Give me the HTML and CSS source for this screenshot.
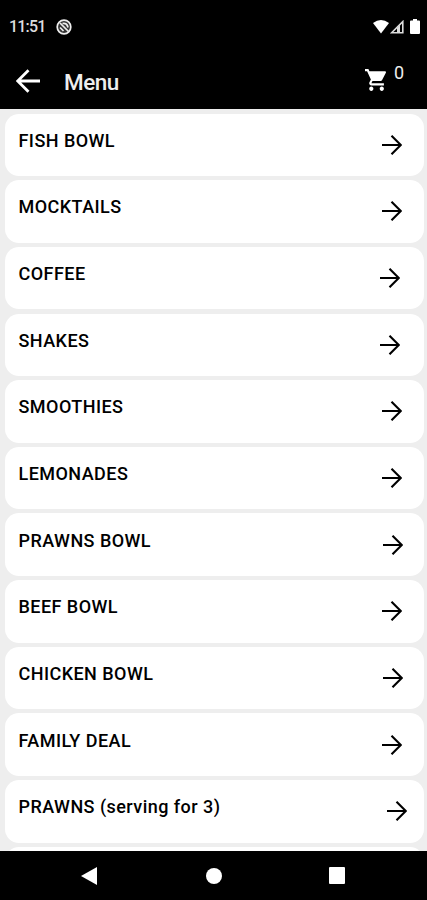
FILE: index.html
```html
<!DOCTYPE html>
<html lang="en">
<head>
    <meta charset="UTF-8">
    <meta name="viewport" content="width=device-width, initial-scale=1.0">
    <title>Menu</title>
    <link rel="stylesheet" href="styles.css">
</head>
<body>
    <svg class="sprite">
        <symbol id="arrow" viewBox="0 0 20 20">
            <path d="M0 10H19M9.5 .7L18.8 10L9.5 19.3" fill="none" stroke="#000" stroke-width="2.1"/>
        </symbol>
    </svg>

    <div class="status-bar">
        <span class="time">11:51</span>
        <svg class="notification" viewBox="0 0 16 16">
            <circle cx="8" cy="8" r="6.8" fill="#333" stroke="#eee" stroke-width="1.7"/>
            <path d="M4 4L12.5 12.5M4 8.5L7.5 12M6.5 4.5Q11 3.5 12 8.5" fill="none" stroke="#eee" stroke-width="1.7"/>
        </svg>
        <div class="system">
            <svg width="16" height="14" viewBox="0 0 16 14">
                <path d="M0 3Q8-3 16 3L8 13.5z" fill="#fff"/>
            </svg>
            <svg width="14" height="14" viewBox="0 0 14 14">
                <path d="M1.6 12.8L12.8 1.6V12.8z" fill="none" stroke="#ddd" stroke-width="1.6"/>
                <path d="M7 8L10 5V12H7z" fill="#ddd"/>
            </svg>
            <svg class="battery" width="10" height="15" viewBox="0 0 10 15">
                <path d="M3 0H7V1.5H9Q10 1.5 10 2.5V14Q10 15 9 15H1Q0 15 0 14V2.5Q0 1.5 1 1.5H3z" fill="#fff"/>
            </svg>
        </div>
    </div>

    <header>
        <svg class="back" viewBox="0 0 24 24">
            <path d="M24 12H2M12.5 1.2L1.7 12L12.5 22.8" fill="none" stroke="#fff" stroke-width="2.8"/>
        </svg>
        <h1>Menu</h1>
        <div class="cart">
            <svg viewBox="1 2 20 20" preserveAspectRatio="none">
                <path fill="#fff" d="M7 18c-1.1 0-1.99.9-1.99 2S5.9 22 7 22s2-.9 2-2-.9-2-2-2zM1 2v2h2l3.6 7.59-1.35 2.45c-.16.28-.25.61-.25.96 0 1.1.9 2 2 2h12v-2H7.42c-.14 0-.25-.11-.25-.25l.03-.12.9-1.63h7.45c.75 0 1.41-.41 1.75-1.03l3.58-6.49c.08-.14.12-.31.12-.48 0-.55-.45-1-1-1H5.21l-.94-2H1zm16 16c-1.1 0-1.99.9-1.99 2s.89 2 1.99 2 2-.9 2-2-.9-2-2-2z"/>
            </svg>
            <span>0</span>
        </div>
    </header>

    <main>
        <div class="item"><h3>FISH BOWL</h3><svg><use href="#arrow"/></svg></div>
        <div class="item"><h3>MOCKTAILS</h3><svg><use href="#arrow"/></svg></div>
        <div class="item left"><h3>COFFEE</h3><svg><use href="#arrow"/></svg></div>
        <div class="item left"><h3>SHAKES</h3><svg><use href="#arrow"/></svg></div>
        <div class="item"><h3>SMOOTHIES</h3><svg><use href="#arrow"/></svg></div>
        <div class="item"><h3>LEMONADES</h3><svg><use href="#arrow"/></svg></div>
        <div class="item right"><h3>PRAWNS BOWL</h3><svg><use href="#arrow"/></svg></div>
        <div class="item"><h3>BEEF BOWL</h3><svg><use href="#arrow"/></svg></div>
        <div class="item right"><h3>CHICKEN BOWL</h3><svg><use href="#arrow"/></svg></div>
        <div class="item"><h3>FAMILY DEAL</h3><svg><use href="#arrow"/></svg></div>
        <div class="item far-right"><h3>PRAWNS (serving for 3)</h3><svg><use href="#arrow"/></svg></div>
        <div class="item"></div>
    </main>

    <nav>
        <svg width="16" height="18" viewBox="0 0 16 18"><path d="M16 0V18L0 9z" fill="#fff"/></svg>
        <svg width="16" height="16" viewBox="0 0 16 16"><circle cx="8" cy="8" r="8" fill="#fff"/></svg>
        <svg width="16" height="17" viewBox="0 0 16 17"><rect width="16" height="17" rx="1" fill="#fff"/></svg>
    </nav>
</body>
</html>
```
FILE: styles.css
```css
* {
    box-sizing: border-box;
}

body {
    font-family: Roboto, sans-serif;
    margin: 0;
    height: 900px;
    display: flex;
    flex-direction: column;
    overflow: hidden;
    background-color: #000;
    color: #fff;
}

svg {
    display: block;
    flex: none;
}

.sprite {
    display: none;
}

.status-bar {
    height: 53px;
    padding: 0 7px 0 9px;
    display: flex;
    align-items: center;
}

.time {
    font-size: 16px;
    font-weight: 500;
    letter-spacing: -0.8px;
    color: #ddd;
    width: 47px;
}

.notification {
    width: 16px;
    height: 16px;
}

.system {
    margin-left: auto;
    display: flex;
    align-items: center;
    gap: 1px;
}

.battery {
    margin-left: 5px;
}

header {
    height: 56px;
    padding: 0 22px 0 16px;
    display: flex;
    align-items: center;
}

.back {
    width: 24px;
    height: 24px;
}

h1 {
    margin: 2px 0 0 24px;
    font-size: 22.5px;
    font-weight: 500;
    letter-spacing: -0.5px;
    color: #eee;
}

.cart {
    margin-left: auto;
    display: flex;
    align-items: flex-start;
}

.cart svg {
    width: 21px;
    height: 22px;
    margin-top: 6px;
}

.cart span {
    font-size: 18px;
    line-height: 18px;
    margin: 1px 0 17px 8px;
    width: 11px;
    color: #eee;
}

main {
    height: 742px;
    padding: 4.6px 3.5px 0 4.5px;
    display: flex;
    flex-direction: column;
    gap: 4.15px;
    overflow: hidden;
    background-color: #eee;
}

.item {
    flex: none;
    height: 62.5px;
    padding: 0 22px 0 14px;
    display: flex;
    align-items: center;
    justify-content: space-between;
    background-color: #fff;
    border-radius: 14px;
    color: #000;
}

.item h3 {
    margin: 0 0 8px;
    font-size: 18px;
    line-height: 22px;
    font-weight: 500;
    letter-spacing: 0.45px;
}

.item svg {
    width: 20px;
    height: 20px;
}

.left {
    padding-right: 24px;
}

.right {
    padding-right: 20.5px;
}

.far-right {
    padding-right: 17px;
}

nav {
    height: 49px;
    padding: 0 82px 0 81px;
    display: flex;
    align-items: center;
    justify-content: space-between;
}

nav svg:nth-child(2) {
    margin-left: 1px;
}
```
